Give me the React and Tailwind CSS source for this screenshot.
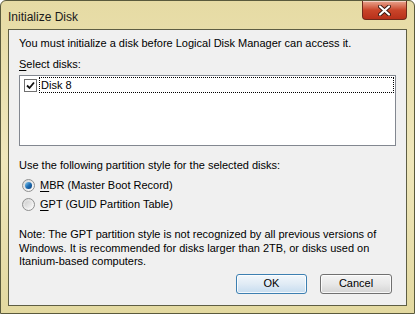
import React from "react";

const font = { fontFamily: '"Liberation Sans", Arial, sans-serif' };

function Radio({ checked, label, mnemonic }) {
  return (
    <div className="flex h-[19px] items-center gap-[5px]">
      <span className="flex h-[13px] w-[13px] items-center justify-center rounded-full border border-[#8e8f8f] bg-gradient-to-br from-[#d6d6d6] to-[#fdfdfd]">
        {checked ? (
          <span className="h-[7px] w-[7px] rounded-full bg-gradient-to-br from-[#8ad0f0] via-[#1f6fb5] to-[#0b3f7a]" />
        ) : (
          <span className="h-[7px] w-[7px] rounded-full bg-gradient-to-br from-[#cfcfcf] to-[#f4f4f4]" />
        )}
      </span>
      <span>
        <span className="underline underline-offset-2">{mnemonic}</span>
        {label}
      </span>
    </div>
  );
}

export default function App() {
  return (
    <div
      className="flex h-[314px] w-[415px] flex-col overflow-hidden rounded-t-[6px] border border-[#5a5a3c] bg-gradient-to-b from-[#e6dba4] via-[#efe7bb] to-[#e3d9a0] px-[7px] pb-[7px] text-[11px] text-black"
      style={font}
    >
      <div className="flex h-[28px] shrink-0 items-start justify-between">
        <div className="pt-[7px] text-[12px] text-[#1a1a1a]">Initialize Disk</div>
        <button className="flex h-[19px] w-[45px] items-center justify-center rounded-b-[4px] border border-t-0 border-[#6e2a1c] bg-gradient-to-b from-[#e8a48e] via-[#c9452a] to-[#b8301a] shadow-[inset_0_1px_0_rgba(255,255,255,0.5)]">
          <svg width="13" height="11" viewBox="0 0 13 11">
            <path
              d="M2 1.5 L11 9.5 M11 1.5 L2 9.5"
              stroke="#3a1a12"
              strokeWidth="4"
              strokeLinecap="round"
            />
            <path
              d="M2 1.5 L11 9.5 M11 1.5 L2 9.5"
              stroke="#ffffff"
              strokeWidth="2.2"
              strokeLinecap="round"
            />
          </svg>
        </button>
      </div>

      <div className="flex flex-1 flex-col border border-[#5e5e44] bg-[#f0f0f0] px-[10px] pt-[6px]">
        <div className="mt-[1px] h-[13px] leading-[13px]">
          You must initialize a disk before Logical Disk Manager can access it.
        </div>
        <div className="mt-[8px] h-[13px] leading-[13px]">
          <span className="underline underline-offset-2">S</span>elect disks:
        </div>
        <div className="mt-[4px] h-[71px] border border-[#828790] bg-white p-[1px]">
          <div className="flex h-[16px] items-center gap-[2px] pl-[3px]">
            <span className="flex h-[13px] w-[13px] items-center justify-center border border-[#707070] bg-white">
              <svg width="9" height="9" viewBox="0 0 9 9">
                <path d="M1 4.5 L3.5 7 L8 1.5" fill="none" stroke="#111" strokeWidth="1.8" />
              </svg>
            </span>
            <span className="flex h-[16px] flex-1 items-center border border-dotted border-black pl-[1px]">
              Disk 8
            </span>
          </div>
        </div>

        <div className="mt-[13px] h-[13px] leading-[13px]">
          Use the following partition style for the selected disks:
        </div>
        <div className="mt-[4px] flex flex-col pl-[3px]">
          <Radio checked mnemonic="M" label="BR (Master Boot Record)" />
          <Radio mnemonic="G" label="PT (GUID Partition Table)" />
        </div>

        <div className="mt-[14px] leading-[13.5px]">
          Note: The GPT partition style is not recognized by all previous versions of
          <br />
          Windows. It is recommended for disks larger than 2TB, or disks used on
          <br />
          Itanium-based computers.
        </div>

        <div className="mt-[5px] flex justify-end gap-[13px] pr-[4px]">
          <button className="h-[20px] w-[71px] rounded-[3px] border border-[#3c7fb1] bg-gradient-to-b from-[#f2f7fb] via-[#e0ebf5] to-[#c6dcef] shadow-[inset_0_0_0_1px_rgba(255,255,255,0.8)]">
            OK
          </button>
          <button className="h-[20px] w-[72px] rounded-[3px] border border-[#707070] bg-gradient-to-b from-[#f4f4f4] via-[#e8e8e8] to-[#d4d4d4] shadow-[inset_0_0_0_1px_rgba(255,255,255,0.8)]">
            Cancel
          </button>
        </div>
      </div>
    </div>
  );
}
